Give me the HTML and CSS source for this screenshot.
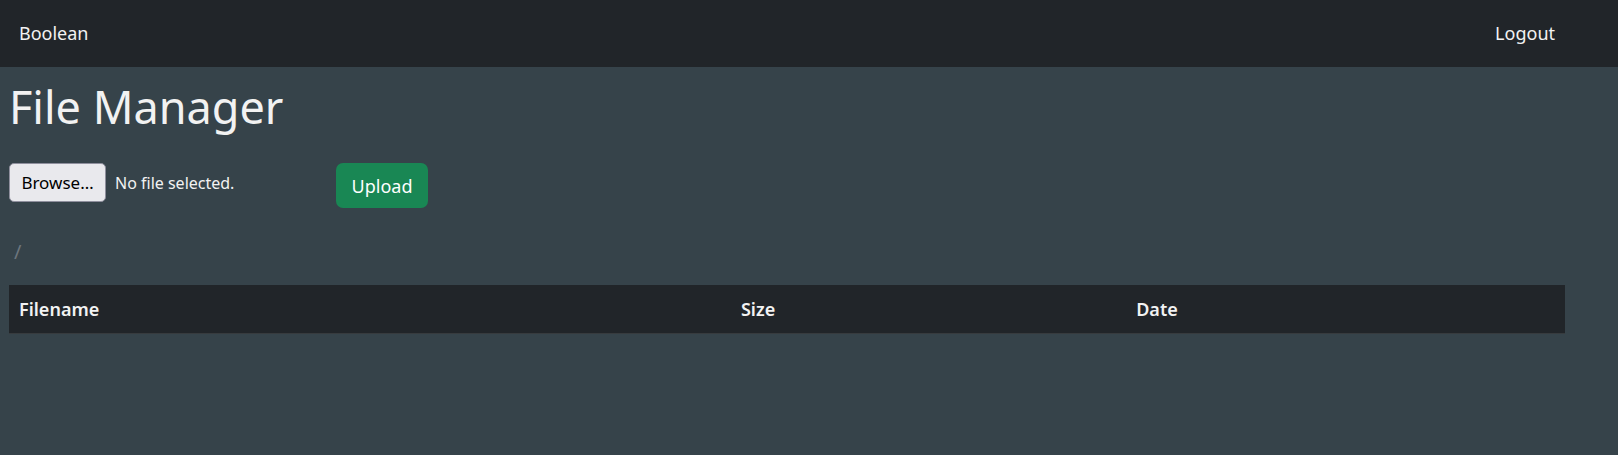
FILE: index.html
```html
<!DOCTYPE html>
<html lang="en">
<head>
<meta charset="utf-8">
<title>File Manager</title>
<link rel="stylesheet" href="styles.css">
</head>
<body>
<nav class="navbar">
  <a class="nav-link" href="#">Boolean</a>
  <a class="nav-link" href="#">Logout</a>
</nav>
<main class="content">
  <h1 class="title">File Manager</h1>
  <form class="upload-form">
    <div class="file-field">
      <input class="file-input" type="file" id="file">
      <label class="file-button" for="file">Browse…</label>
      <span class="file-status">No file selected.</span>
    </div>
    <button class="upload-button" type="submit">Upload</button>
  </form>
  <div class="path">/</div>
  <table class="files">
    <thead>
      <tr><th class="col-name" scope="col">Filename</th><th class="col-size" scope="col">Size</th><th class="col-date" scope="col">Date</th></tr>
    </thead>
  </table>
</main>
</body>
</html>
```

FILE: styles.css
```css
* { box-sizing: border-box; }
body {
  margin: 0;
  background: #36434a;
  color: #f2f2f2;
  font: 18px/30px "Noto Sans", sans-serif;
}
.navbar {
  display: flex;
  align-items: center;
  justify-content: space-between;
  padding: 18px 63px 19px 19px;
  background: #212529;
}
.nav-link { color: #f2f2f2; text-decoration: none; }
.content { padding: 10px 53px 0 9px; }
.title {
  margin: 0;
  font-size: 45px;
  line-height: 60px;
  font-weight: 400;
}
.upload-form {
  display: flex;
  align-items: flex-start;
  margin: 26px 0 0;
}
.file-field {
  display: flex;
  align-items: center;
  position: relative;
  width: 327px;
  gap: 9px;
  font-size: 16px;
}
.file-input {
  position: absolute;
  width: 97px;
  height: 39px;
  opacity: 0;
}
.file-button {
  width: 97px;
  padding: 4px 0;
  border: 1px solid #8f8f9d;
  border-radius: 5px;
  background: #e9e9ed;
  color: #000;
  font-size: 17px;
  line-height: 29px;
  text-align: center;
}
.upload-button {
  width: 92px;
  height: 45px;
  border: 0;
  border-radius: 7px;
  padding: 0;
  background: #198754;
  color: #fff;
  font: inherit;
}
.path {
  padding: 0 5px;
  margin: 29px 0 18px;
  color: #6c757d;
  font-size: 20px;
}
.files {
  width: 100%;
  border-collapse: collapse;
  table-layout: fixed;
  border-bottom: 1px solid #373b3e;
}
.files th {
  padding: 9px 10px;
  background: #212529;
  font-weight: 600;
  text-align: left;
}
.col-name { width: 46.4%; }
.col-size { width: 25.4%; }
```
